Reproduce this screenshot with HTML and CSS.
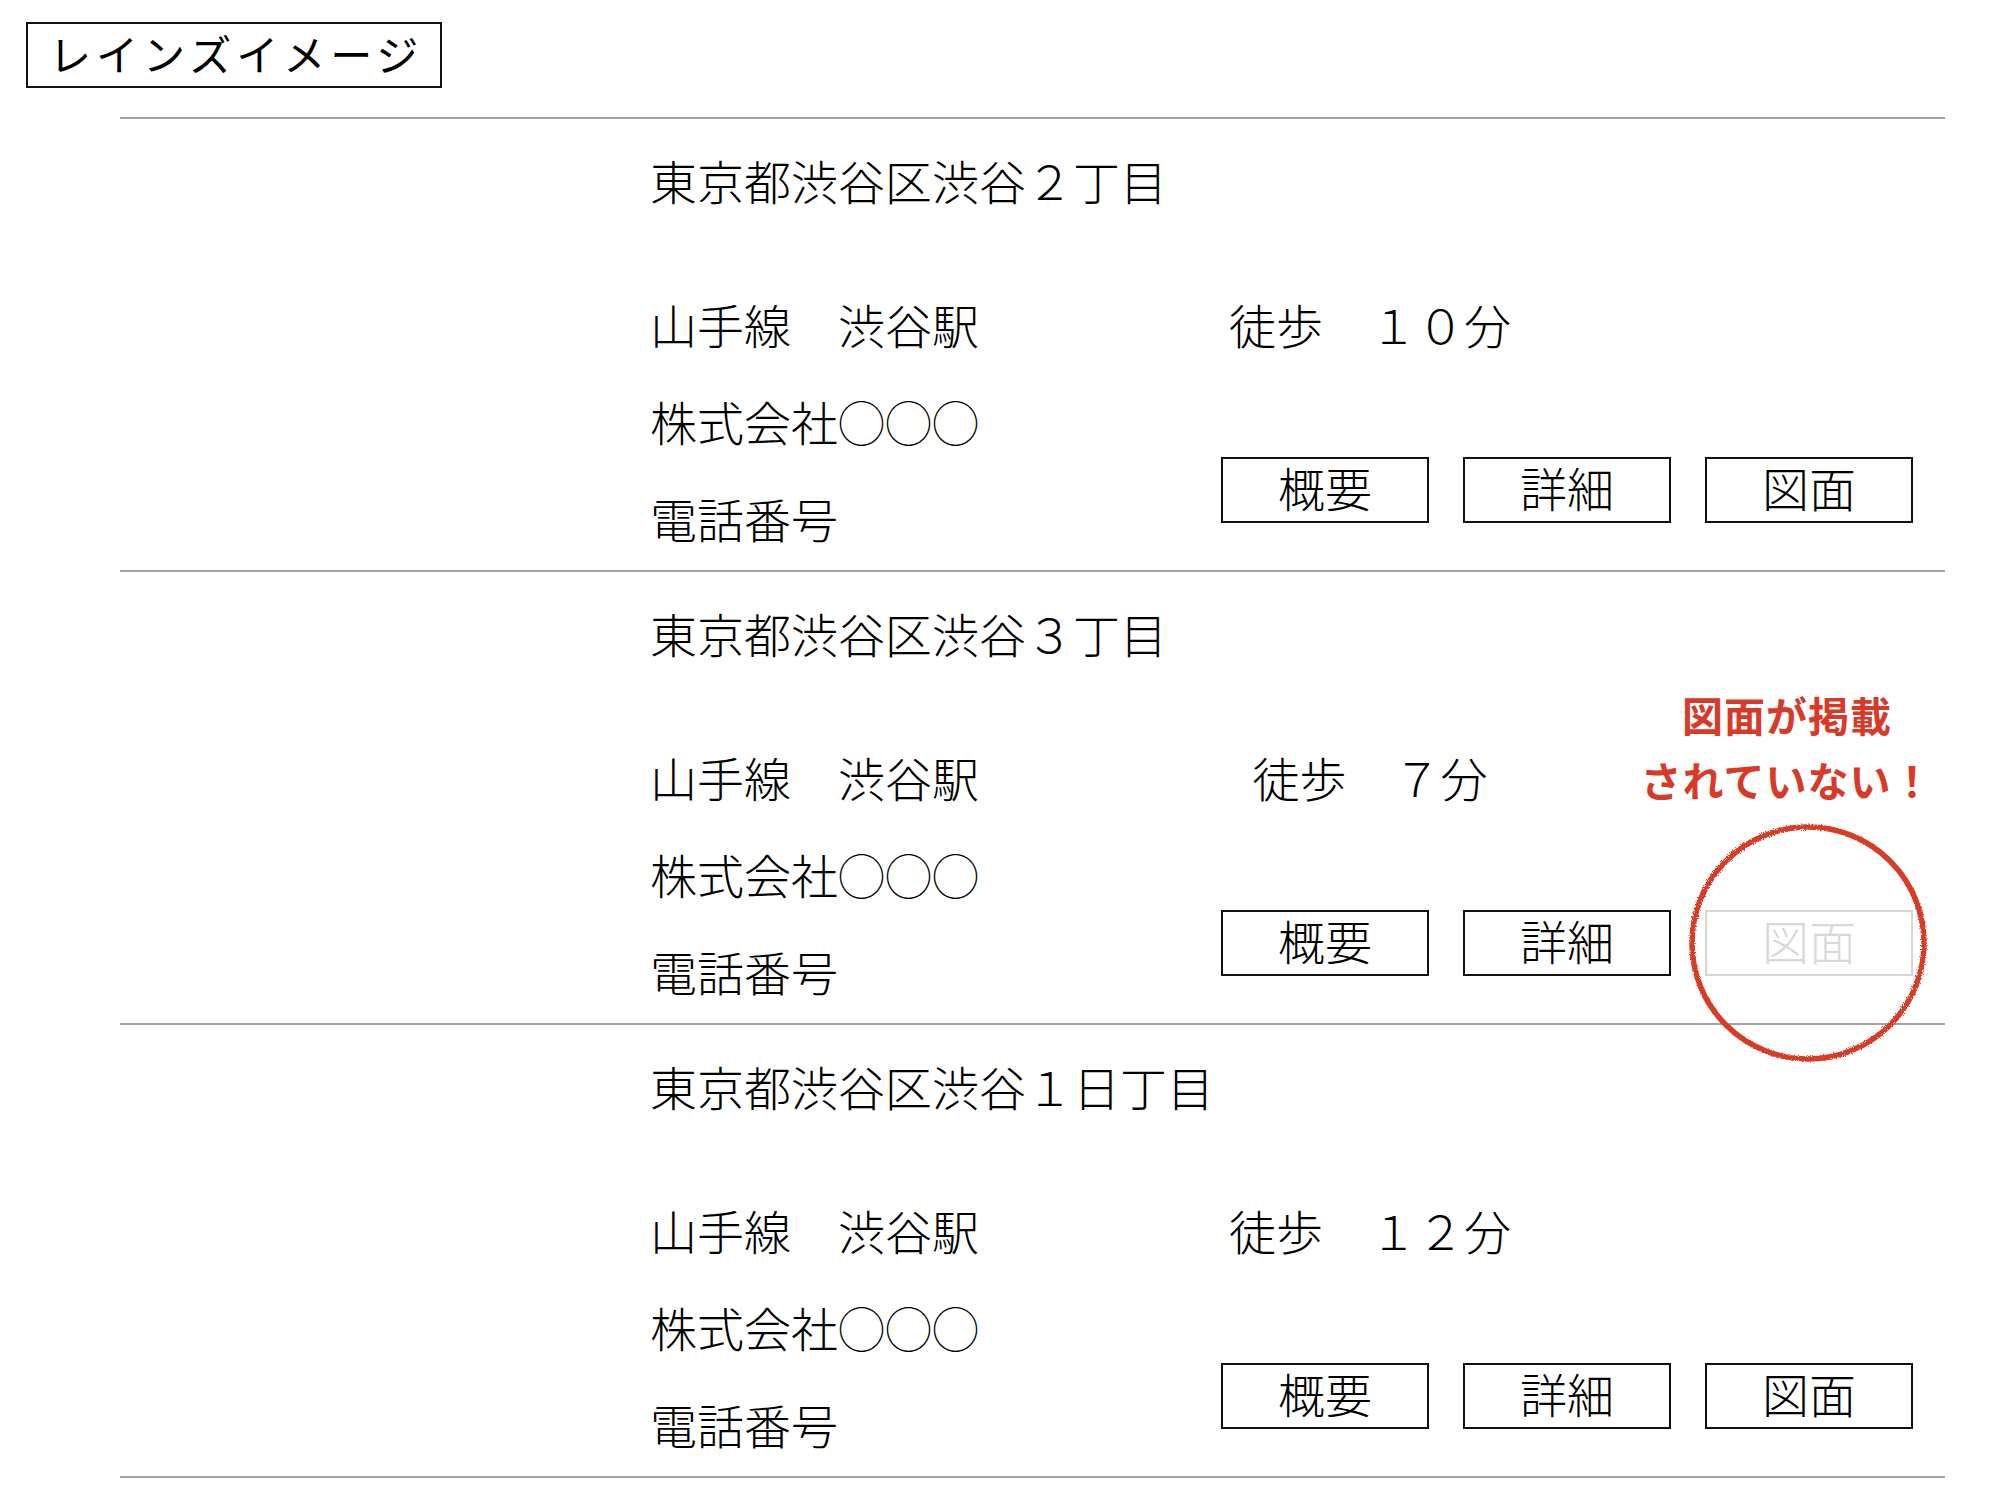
FILE: index.html
```html
<!DOCTYPE html>
<html lang="ja">
<head>
<meta charset="utf-8">
<title>レインズイメージ</title>
<link rel="stylesheet" href="styles.css">
</head>
<body>
<div class="page">
  <div class="title">レインズイメージ</div>
  <div class="list">
    <section class="listing">
      <div class="address">東京都渋谷区渋谷２丁目</div>
      <div class="details">
        <div class="info">
          <div class="line">山手線　渋谷駅</div>
          <div class="line">株式会社◯◯◯</div>
          <div class="line">電話番号</div>
        </div>
        <div class="side">
          <div class="walk">徒歩　１０分</div>
          <div class="buttons">
            <span class="btn">概要</span>
            <span class="btn">詳細</span>
            <span class="btn">図面</span>
          </div>
        </div>
      </div>
    </section>
    <section class="listing">
      <div class="address">東京都渋谷区渋谷３丁目</div>
      <div class="details">
        <div class="info">
          <div class="line">山手線　渋谷駅</div>
          <div class="line">株式会社◯◯◯</div>
          <div class="line">電話番号</div>
        </div>
        <div class="side">
          <div class="walk">徒歩　７分</div>
          <div class="buttons">
            <span class="btn">概要</span>
            <span class="btn">詳細</span>
            <span class="btn disabled">図面</span>
          </div>
        </div>
      </div>
      <div class="note">図面が掲載<br>されていない！</div>
      <svg class="ring" width="260" height="260" viewBox="0 0 260 260" aria-hidden="true">
        <defs>
          <filter id="rough" x="-10%" y="-10%" width="120%" height="120%">
            <feTurbulence type="fractalNoise" baseFrequency="0.9" numOctaves="2" seed="3" result="n"/>
            <feDisplacementMap in="SourceGraphic" in2="n" scale="3.5"/>
          </filter>
        </defs>
        <circle cx="130" cy="130" r="116" fill="none" stroke="#d83a27" stroke-width="5.5" filter="url(#rough)"/>
      </svg>
    </section>
    <section class="listing">
      <div class="address">東京都渋谷区渋谷１日丁目</div>
      <div class="details">
        <div class="info">
          <div class="line">山手線　渋谷駅</div>
          <div class="line">株式会社◯◯◯</div>
          <div class="line">電話番号</div>
        </div>
        <div class="side">
          <div class="walk">徒歩　１２分</div>
          <div class="buttons">
            <span class="btn">概要</span>
            <span class="btn">詳細</span>
            <span class="btn">図面</span>
          </div>
        </div>
      </div>
    </section>
  </div>
</div>
</body>
</html>
```
FILE: styles.css
```css
html, body {
  margin: 0;
  padding: 0;
  background: #ffffff;
}

body {
  font-family: "Noto Sans CJK JP", "Noto Sans", sans-serif;
  color: #000000;
}

.page {
  padding: 22px 0 0 26px;
}

.title {
  box-sizing: border-box;
  width: 416px;
  height: 66px;
  border: 2px solid #111;
  padding-left: 21px;
  font-size: 42px;
  line-height: 57px;
  letter-spacing: 5px;
  font-weight: 400;
  white-space: nowrap;
}

.list {
  margin: 29px 0 0 94px;
  width: 1825px;
  border-top: 2px solid #a3a3a3;
}

.listing {
  position: relative;
  box-sizing: border-box;
  height: 453px;
  padding: 12px 0 0 530px;
  border-bottom: 2px solid #a3a3a3;
  font-size: 47px;
  font-weight: 300;
}

.address {
  line-height: 97px;
  white-space: nowrap;
}

.details {
  display: flex;
  margin-top: 47px;
}

.info {
  width: 571px;
}

.line {
  line-height: 97px;
  white-space: nowrap;
}

.side {
  display: flex;
  flex-direction: column;
}

.walk {
  width: 298px;
  text-align: center;
  line-height: 97px;
  white-space: nowrap;
}

.buttons {
  display: flex;
  gap: 34px;
  margin-top: 85px;
}

.btn {
  box-sizing: border-box;
  width: 208px;
  height: 66px;
  border: 2px solid #111;
  text-align: center;
  line-height: 56px;
  letter-spacing: 0;
}

.btn.disabled {
  border-color: #d6d6d6;
  color: #d8d8d8;
}

.note {
  position: absolute;
  left: 1517px;
  top: 110px;
  width: 300px;
  text-align: center;
  color: #d83a27;
  font-size: 41px;
  font-weight: 700;
  line-height: 65px;
  letter-spacing: 1px;
  white-space: nowrap;
}

.ring {
  position: absolute;
  left: 1558px;
  top: 241px;
  overflow: visible;
}
```
